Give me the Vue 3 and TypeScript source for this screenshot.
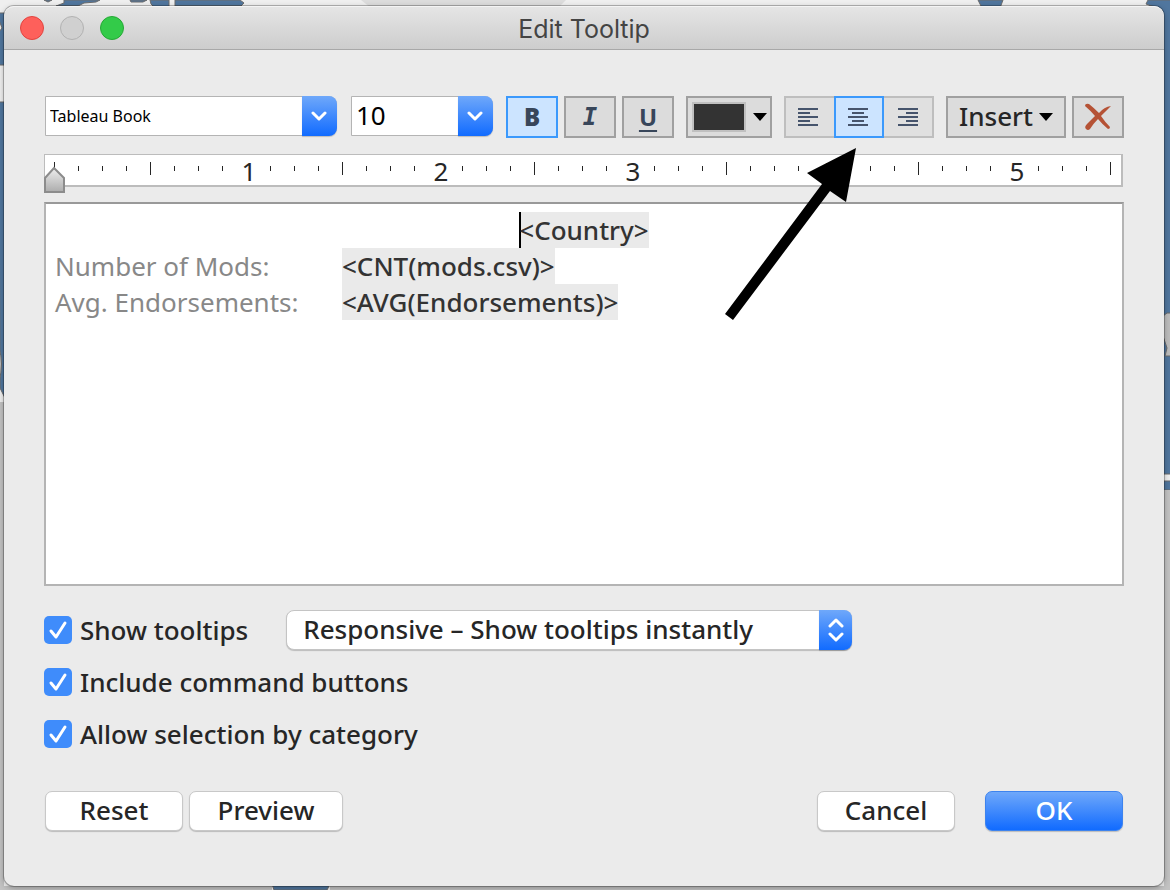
<script setup lang="ts">
import { computed, ref } from 'vue'

type Align = 'left' | 'center' | 'right'

interface Tick {
  x: number
  tall: boolean
  label: string
}

const fontFamily = ref('Tableau Book')
const fontSize = ref('10')
const mode = ref('responsive')
const bold = ref(true)
const italic = ref(false)
const underline = ref(false)
const align = ref<Align>('center')

const alignments: { id: Align; name: string; path: string }[] = [
  { id: 'left', name: 'Align left', path: 'M0 1h20M0 5h12M0 9h20M0 13h12M0 17h20' },
  { id: 'center', name: 'Align center', path: 'M0 1h20M4 5h12M0 9h20M4 13h12M0 17h20' },
  { id: 'right', name: 'Align right', path: 'M0 1h20M8 5h12M0 9h20M8 13h12M0 17h20' },
]

const options = ref([
  { id: 'show', label: 'Show tooltips', checked: true },
  { id: 'commands', label: 'Include command buttons', checked: true },
  { id: 'category', label: 'Allow selection by category', checked: true },
])

const fields = [
  { label: 'Number of Mods:', value: '<CNT(mods.csv)>' },
  { label: 'Avg. Endorsements:', value: '<AVG(Endorsements)>' },
]

const ticks = computed<Tick[]>(() =>
  Array.from({ length: 45 }, (_, i) => ({
    x: 9 + i * 24,
    tall: i % 8 === 4 || i === 0,
    label: i > 0 && i % 8 === 0 ? String(i / 8) : '',
  })),
)
</script>

<template>
  <div class="desktop">
    <svg class="map" viewBox="0 0 1170 890" preserveAspectRatio="none" aria-hidden="true">
      <rect width="1170" height="890" fill="#efefef" />
      <path d="M361 0h205l-8 8H371z" fill="#dcdcdc" />
      <g fill="#50769e" stroke="#6b6b6b" stroke-width="1">
        <path d="M44 0l4 2 4-2zM64 0h36l-4 2-12 1-6 3H56l8-3zM130 0h17l-4 2h-12zM150 0h19v8h-14l-4-4zM175 0h65l4 3-3 3h-66z" />
        <path d="M978 0h25l-3 8h-18zM1148 0h23v340h-9V10l-16-6z" />
        <path d="M-1 13h8v52H-1v-33l3-4-3-8z" />
        <path d="M-1 102h8v300l-7-14z" />
        <path d="M1162 340l9-1v135h-9zM1162 481h9v9h-9z" />
        <path d="M272 884h58l-3 6h-53z" />
      </g>
      <path d="M-1 348q5 15 0 34zM1163 316l4-3h4v43h-6l2-8-4-12z" fill="#bdbdbd" stroke="#6b6b6b" />
      <path d="M0 402h4v488H0zM1164 490h6v400h-6zM4 886h268v4H4zM330 886h840v4H330z" fill="#c2c2c2" />
    </svg>

    <main class="dialog" role="dialog" aria-labelledby="dialog-title">
      <header class="titlebar">
        <div class="lights">
          <button class="light close" type="button" aria-label="Close"></button>
          <button class="light minimize" type="button" aria-label="Minimize" disabled></button>
          <button class="light zoom" type="button" aria-label="Zoom"></button>
        </div>
        <h1 id="dialog-title">Edit Tooltip</h1>
      </header>

      <form class="body" @submit.prevent>
        <div class="toolbar">
          <div class="combo family">
            <select v-model="fontFamily" aria-label="Font">
              <option>Tableau Book</option>
            </select>
            <span class="cap">
              <svg width="18" height="10" viewBox="0 0 18 10"><path d="M2 2l6 6 6-6" /></svg>
            </span>
          </div>
          <div class="combo size">
            <select v-model="fontSize" aria-label="Font size">
              <option>10</option>
            </select>
            <span class="cap">
              <svg width="18" height="10" viewBox="0 0 18 10"><path d="M2 2l6 6 6-6" /></svg>
            </span>
          </div>

          <div class="group">
            <button class="tool square" :class="{ on: bold }" type="button" aria-label="Bold" @click="bold = !bold">
              <b>B</b>
            </button>
            <button class="tool square" :class="{ on: italic }" type="button" aria-label="Italic" @click="italic = !italic">
              <i>I</i>
            </button>
            <button class="tool square" :class="{ on: underline }" type="button" aria-label="Underline" @click="underline = !underline">
              <u>U</u>
            </button>
          </div>

          <button class="tool color" type="button" aria-label="Text color">
            <span class="swatch"></span>
            <svg width="14" height="8" viewBox="0 0 14 8"><path d="M0 0h14L7 8z" /></svg>
          </button>

          <div class="aligns" role="group" aria-label="Alignment">
            <button
              v-for="a in alignments"
              :key="a.id"
              class="align"
              :class="[a.id, { on: align === a.id }]"
              type="button"
              :aria-label="a.name"
              @click="align = a.id"
            >
              <svg width="20" height="18" viewBox="0 0 20 18"><path :d="a.path" /></svg>
            </button>
          </div>

          <div class="group">
            <button class="tool insert" type="button">
              Insert
              <svg width="14" height="8" viewBox="0 0 14 8"><path d="M0 0h14L7 8z" /></svg>
            </button>
            <button class="tool square" type="button" aria-label="Clear">
              <svg class="cross" width="28" height="28" viewBox="0 0 28 28">
                <path d="M1 3Q1 0 5 1Q10 5 15 10Q20 4 27 3Q22 8 17 13Q21 19 26 24Q26 26 24 26Q18 21 14 16Q9 21 6 26Q4 28 2 26Q0 24 3 21Q7 17 11 13Q7 8 1 3Z" />
              </svg>
            </button>
          </div>
        </div>

        <div class="ruler">
          <svg height="31" aria-hidden="true">
            <template v-for="t in ticks" :key="t.x">
              <text v-if="t.label" :x="t.x + 3" y="26">{{ t.label }}</text>
              <rect v-else :x="t.x" :y="t.tall ? 7 : 11" width="1" :height="t.tall ? 13 : 5" />
            </template>
            <defs>
              <linearGradient id="marker-fill" x1="0" y1="0" x2="0" y2="1">
                <stop offset="0" stop-color="#eeeeee" />
                <stop offset="1" stop-color="#acacac" />
              </linearGradient>
            </defs>
            <path class="marker" d="M0 23l9-10 10 10v14H0z" />
          </svg>
          <svg class="pointer" width="132" height="174" viewBox="0 0 132 174" aria-hidden="true">
            <path d="M131 0L82 25l15 11L0 166l8 6L105 43l16 11z" />
          </svg>
        </div>

        <div class="editor" contenteditable="true" role="textbox" aria-multiline="true" aria-label="Tooltip text">
          <p class="heading"><span class="token caret">&lt;Country&gt;</span></p>
          <p v-for="f in fields" :key="f.label" class="field">
            <span>{{ f.label }}</span><span class="token">{{ f.value }}</span>
          </p>
        </div>

        <div class="settings">
          <div v-for="o in options" :key="o.id" class="setting">
            <label>
              <input v-model="o.checked" type="checkbox" />
              <span>{{ o.label }}</span>
            </label>
            <div v-if="o.id === 'show'" class="combo mode">
              <select v-model="mode" aria-label="Tooltip mode">
                <option value="responsive">Responsive – Show tooltips instantly</option>
                <option value="hover">On Hover – Show tooltips on hover</option>
              </select>
              <span class="cap">
                <svg width="16" height="26" viewBox="0 0 16 26"><path d="M2 9l6-6 6 6M2 17l6 6 6-6" /></svg>
              </span>
            </div>
          </div>
        </div>

        <footer class="actions">
          <button class="push" type="button">Reset</button>
          <button class="push wide" type="button">Preview</button>
          <span class="spacer"></span>
          <button class="push" type="button">Cancel</button>
          <button class="push primary" type="submit">OK</button>
        </footer>
      </form>
    </main>
  </div>
</template>

<style>
body {
  margin: 0;
}
</style>

<style scoped>
* {
  box-sizing: border-box;
}

.desktop {
  position: relative;
  display: flex;
  min-height: 100vh;
  padding: 6px 6px 4px 4px;
  font-family: 'Noto Sans', 'Open Sans', sans-serif;
  font-size: 26px;
  font-weight: 500;
  color: #262626;
}

.map {
  position: absolute;
  inset: 0;
  width: 100%;
  height: 100%;
}

.dialog {
  position: relative;
  display: flex;
  flex: 1;
  flex-direction: column;
  min-width: 0;
  border-radius: 10px;
  background: #ebebeb;
  box-shadow: 0 0 0 1px rgba(0, 0, 0, 0.25), 0 2px 6px rgba(0, 0, 0, 0.3);
}

.titlebar {
  display: grid;
  grid-template-columns: 1fr auto 1fr;
  align-items: center;
  height: 44px;
  padding: 0 16px;
  border-top: 1px solid #f4f4f4;
  border-bottom: 1px solid #a8a8a8;
  border-radius: 10px 10px 0 0;
  background: linear-gradient(#e5e5e5, #cdcdcd);
}

.titlebar h1 {
  margin: 0;
  padding-top: 2px;
  font-family: Inter, Roboto, sans-serif;
  font-size: 25px;
  font-weight: 400;
  line-height: 32px;
  color: #444;
}

.lights {
  display: flex;
  gap: 16px;
}

.light {
  width: 24px;
  height: 24px;
  padding: 0;
  border: 1px solid #e2443f;
  border-radius: 50%;
  background: #fe605b;
}

.light.minimize {
  border-color: #b2b2b2;
  background: #d0d0d0;
}

.light.zoom {
  border-color: #25a935;
  background: #33cb49;
}

.body {
  display: flex;
  flex: 1;
  flex-direction: column;
  padding: 46px 40px 55px;
}

select,
button,
input {
  margin: 0;
  font: inherit;
  color: inherit;
}

.toolbar {
  display: flex;
  gap: 12px;
  height: 42px;
  padding-left: 1px;
}

.group {
  display: flex;
  gap: 6px;
}

.combo {
  display: grid;
  grid-template-columns: 1fr 35px;
  height: 40px;
}

.combo select {
  grid-area: 1 / 1 / 2 / 3;
  width: 100%;
  height: 40px;
  padding: 0 36px 2px 4px;
  appearance: none;
  border: 1px solid #b4b4b4;
  border-radius: 0 8px 8px 0;
  background: #fff;
  color: #000;
}

.combo .cap {
  grid-area: 1 / 2 / 2 / 3;
  z-index: 1;
  display: flex;
  align-items: center;
  justify-content: center;
  border-radius: 0 8px 8px 0;
  background: linear-gradient(#6fa8fa, #116bff);
  box-shadow: 0 1px 1px rgba(0, 0, 0, 0.2);
  pointer-events: none;
}

.cap svg {
  fill: none;
  stroke: #fff;
  stroke-width: 3;
  stroke-linecap: round;
  stroke-linejoin: round;
}

.family {
  flex: 1;
  min-width: 120px;
  margin-right: 2px;
}

.family select {
  padding-bottom: 0;
  font-size: 16px;
  font-weight: 400;
}

.size {
  width: 142px;
  margin-right: 1px;
}

.size select {
  font-weight: 400;
}

.tool,
.align {
  display: flex;
  align-items: center;
  justify-content: center;
  padding: 0;
  border: 2px solid #a0a0a0;
  background: #dcdcdc;
}

.square {
  width: 52px;
  color: #38465a;
  font-weight: 700;
  font-size: 24px;
  line-height: 32px;
}

.square i {
  font-family: 'DejaVu Sans Mono', monospace;
}

.square u {
  text-decoration-thickness: 2px;
  text-underline-offset: 4px;
}

.tool.on,
.align.on {
  border-color: #3b99fc;
  background: #cce4ff;
}

.color {
  gap: 7px;
  width: 86px;
}

.swatch {
  width: 54px;
  height: 30px;
  border: 2px solid #c0c0c0;
  background: #333;
}

.aligns {
  display: flex;
}

.align {
  width: 50px;
  padding-right: 2px;
  border-color: #bebebe;
  background: #e0e0e0;
}

.align.left {
  padding-right: 4px;
  border-right-width: 0;
}

.align.right {
  padding-right: 0;
  border-left-width: 0;
}

.align svg {
  stroke: #46546c;
  stroke-width: 2;
}

.insert {
  gap: 6px;
  width: 120px;
  padding-bottom: 2px;
}

.insert svg {
  margin-top: 2px;
}

.cross {
  fill: #b55235;
}

.ruler {
  position: relative;
  height: 33px;
  margin-top: 16px;
  margin-right: 1px;
  border: 1px solid #bcbcbc;
  border-width: 1px 2px 2px 1px;
  background: #fff;
}

.ruler > svg:first-child {
  display: block;
  width: 100%;
  height: 30px;
  overflow: visible;
  fill: #262626;
}

.ruler text {
  font-size: 26px;
  font-weight: 400;
  text-anchor: middle;
}

.ruler .marker {
  fill: url(#marker-fill);
  stroke: #8c8c8c;
  stroke-width: 2;
}

.pointer {
  position: absolute;
  top: -7px;
  right: 264px;
  z-index: 2;
  pointer-events: none;
}

.editor {
  flex: 1;
  min-height: 150px;
  margin-top: 15px;
  padding: 8px 9px;
  border: 2px solid #b4b4b4;
  border-top-color: #999;
  background: #fff;
  line-height: 36px;
  outline: none;
}

.editor p {
  margin: 0;
}

.heading {
  text-align: center;
}

.field {
  display: grid;
  grid-template-columns: 287px auto;
  justify-content: start;
  color: #888;
  font-weight: 400;
}

.token {
  display: inline-block;
  background: #eaeaea;
  color: #333;
  font-weight: 500;
}

.caret {
  box-shadow: inset 2px 0 #000;
}

.settings {
  display: grid;
  gap: 12px;
  margin-top: 24px;
}

.setting {
  display: flex;
  align-items: center;
  gap: 38px;
  height: 40px;
}

.setting label {
  display: flex;
  align-items: center;
  gap: 8px;
  line-height: 36px;
}

.setting input {
  width: 28px;
  height: 28px;
  appearance: none;
  border-radius: 5px;
  background: #3f8cfb;
}

.setting input:checked {
  background: #3f8cfb
    url("data:image/svg+xml,%3Csvg xmlns='http://www.w3.org/2000/svg' viewBox='0 0 28 28'%3E%3Cpath d='M7 15l5 6 9-14' fill='none' stroke='white' stroke-width='3' stroke-linecap='round' stroke-linejoin='round'/%3E%3C/svg%3E");
}

.mode {
  grid-template-columns: 1fr 33px;
  width: 566px;
}

.mode select {
  padding-left: 16px;
  border-color: #c4c4c4;
  border-radius: 8px;
  box-shadow: 0 1px 1px rgba(0, 0, 0, 0.2);
  color: #262626;
}

.actions {
  display: flex;
  gap: 6px;
  margin-top: 37px;
  padding: 0 1px;
}

.spacer {
  flex: 1;
}

.push {
  width: 138px;
  height: 40px;
  padding: 0 0 2px;
  border: 1px solid #c8c8c8;
  border-radius: 7px;
  background: #fff;
  box-shadow: 0 1px 1px rgba(0, 0, 0, 0.2);
  line-height: 36px;
}

.push.wide {
  width: 154px;
}

.push.primary {
  margin-left: 24px;
  border-color: #3d83ee;
  background: linear-gradient(#6fa8fa, #116bff);
  color: #fff;
}
</style>
